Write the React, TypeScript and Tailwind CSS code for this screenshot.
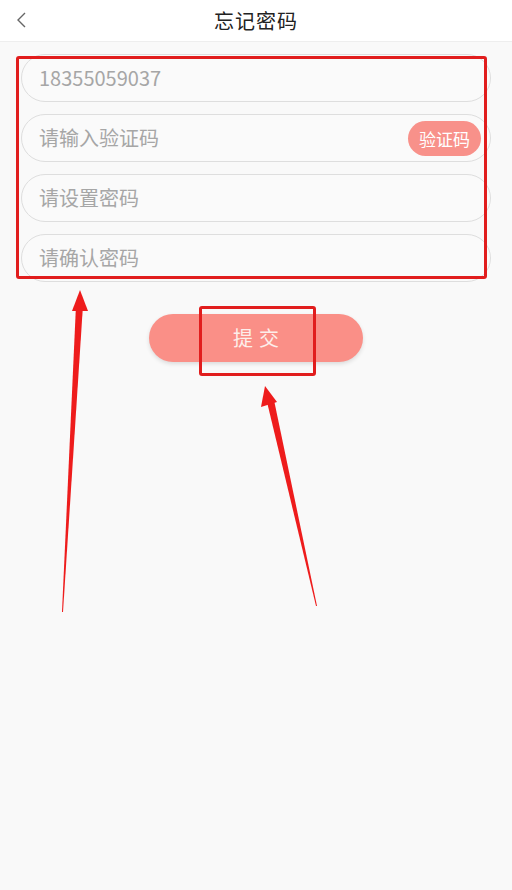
import React from "react";

const font = { fontFamily: '"Noto Sans CJK SC", "Noto Sans", sans-serif' };

function Field({ placeholder, children }: { placeholder: string; children?: React.ReactNode }) {
  return (
    <div className="flex items-center h-[48px] rounded-full border border-[#dedede] bg-[#fafafa] pl-[17px] pr-[9px]">
      <span className="flex-1 text-[20px] text-[#a6a6a6] leading-none">{placeholder}</span>
      {children}
    </div>
  );
}

export default function App() {
  return (
    <div className="relative min-h-[890px] bg-[#f9f9f9] overflow-hidden" style={font}>
      {/* Header */}
      <div className="relative flex items-center justify-center h-[42px] bg-white border-b border-[#eeeeee]">
        <svg className="absolute left-[15px] top-[11px]" width="12" height="18" viewBox="0 0 12 18">
          <polyline points="10,2 3,9 10,16" fill="none" stroke="#666" strokeWidth="1.4" />
        </svg>
        <h1 className="text-[20px] text-[#222] leading-none tracking-[1px]">忘记密码</h1>
      </div>

      {/* Form */}
      <div className="flex flex-col gap-3 mt-[12px] mx-[21px]">
        <Field placeholder="18355059037" />
        <Field placeholder="请输入验证码">
          <button className="h-[35px] px-[11px] rounded-full bg-[#f8918a] text-white text-[17px] leading-none">
            验证码
          </button>
        </Field>
        <Field placeholder="请设置密码" />
        <Field placeholder="请确认密码" />
      </div>

      <div className="flex justify-center mt-[32px]">
        <button className="w-[214px] h-[48px] pl-[6px] rounded-full bg-[#fa8f87] text-[#fdeeea] text-[20px] tracking-[6px] shadow-[0_2px_4px_rgba(0,0,0,0.12)]">
          提交
        </button>
      </div>

      {/* Annotation boxes */}
      <div className="absolute left-[16px] top-[56px] w-[471px] h-[223px] border-[3px] border-[#e11d1d] rounded-[3px]" />
      <div className="absolute left-[199px] top-[306px] w-[117px] h-[70px] border-[3px] border-[#e11d1d] rounded-[3px]" />

      {/* Annotation arrows */}
      <svg className="absolute left-0 top-0" width="512" height="890" viewBox="0 0 512 890">
        <polygon points="62,612 76,305 83,305 63,612" fill="#ee1c1c" />
        <polygon points="80,290 72,311 88,311" fill="#ee1c1c" />
        <polygon points="316,606 267,402 274,400 317,606" fill="#ee1c1c" />
        <polygon points="265,386 261,407 277,402" fill="#ee1c1c" />
      </svg>
    </div>
  );
}
